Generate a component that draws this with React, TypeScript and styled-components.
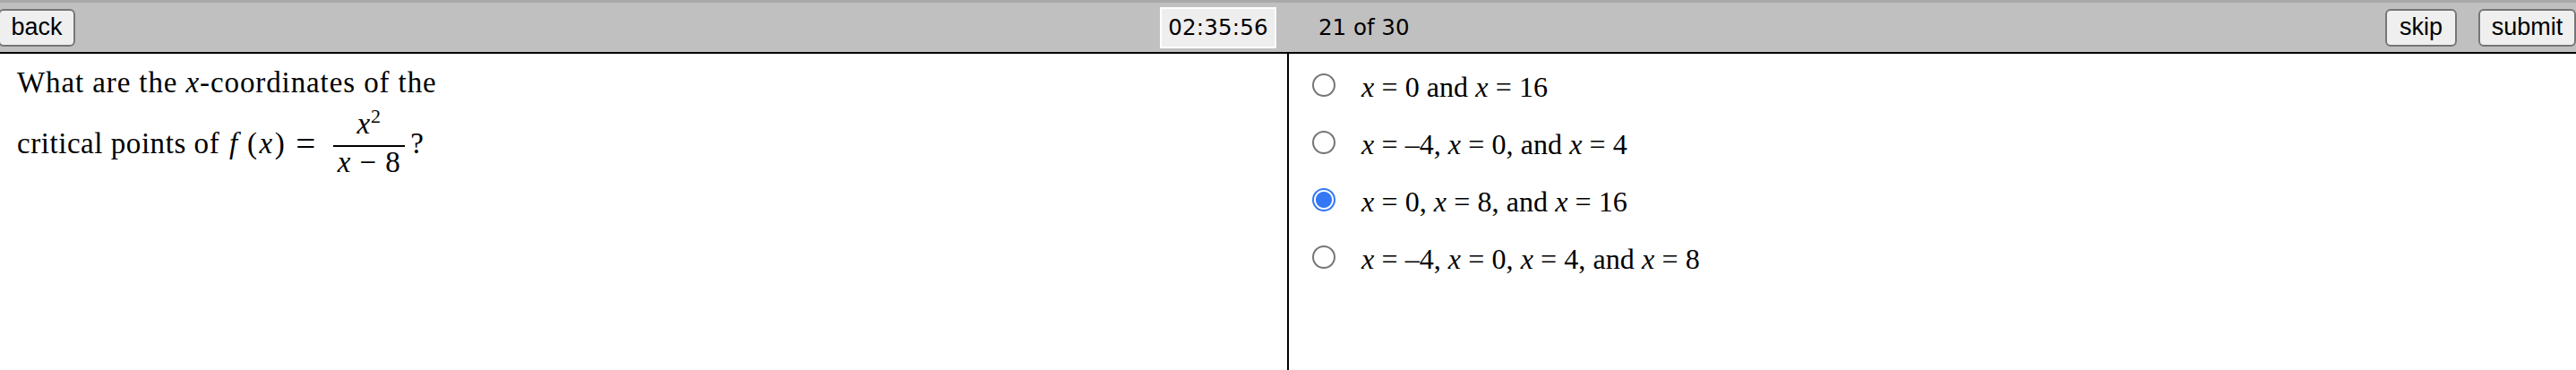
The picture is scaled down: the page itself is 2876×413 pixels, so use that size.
import React from "react";
import styled, { createGlobalStyle } from "styled-components";

const Global = createGlobalStyle`
  html, body { margin: 0; padding: 0; background: #fff; }
  #root { height: 100vh; }
`;

const Page = styled.div`
  display: flex;
  flex-direction: column;
  height: 100%;
  overflow: hidden;
`;

const Toolbar = styled.header`
  display: grid;
  grid-template-columns: 1437px 1fr;
  box-sizing: border-box;
  height: 60px;
  background: #c0c0c0;
  border-top: 3px solid #a9a9a9;
  border-bottom: 2px solid #000;
`;

const ToolbarSide = styled.div`
  display: flex;
  align-items: center;
  justify-content: space-between;
  min-width: 0;
`;

const ToolbarGroup = styled.div`
  display: flex;
  align-items: center;
  gap: 24px;
`;

const Button = styled.button`
  box-sizing: border-box;
  height: 42px;
  padding: 0;
  background: #efefef;
  border: 2px solid #767676;
  border-radius: 6px;
  color: #000;
  font: 27px "Liberation Sans", Arial, sans-serif;
`;

const BackButton = styled(Button)`
  width: 86px;
  margin-left: -2px;
`;

const EndButton = styled(Button)<{ $w: number }>`
  width: ${(p) => p.$w}px;
`;

const Timer = styled.div`
  box-sizing: border-box;
  width: 130px;
  height: 46px;
  margin-right: 12px;
  display: flex;
  align-items: center;
  justify-content: center;
  background: #eee;
  border: 2px solid #fff;
  font: 24.5px "DejaVu Sans", Verdana, sans-serif;
  letter-spacing: 0.2px;
  color: #000;
`;

const Counter = styled.div`
  margin-left: 35px;
  font: 24.5px "DejaVu Sans", Verdana, sans-serif;
  color: #000;
`;

const Content = styled.main`
  flex: 1;
  display: grid;
  grid-template-columns: 1439px 1fr;
`;

const Question = styled.section`
  box-sizing: border-box;
  border-right: 2px solid #000;
  padding: 10px 0 0 19px;
  font: 33px "Liberation Serif", "Times New Roman", serif;
  letter-spacing: 0.9px;
  color: #000;
`;

const QuestionLine = styled.div`
  display: flex;
  align-items: center;
  white-space: pre;
  height: 44px;
`;

const FormulaLine = styled(QuestionLine)`
  height: 76px;
  margin-top: 8px;
`;

const LeadText = styled.span`
  letter-spacing: 0.55px;
`;

const Italic = styled.i`
  font-style: italic;
`;

const MathGroup = styled.span`
  display: inline-flex;
  align-items: center;
  gap: 10px;
  margin-left: 2px;
`;

const Parenthesized = styled.span`
  letter-spacing: 2.5px;
`;

const Equals = styled.span`
  font-size: 39px;
  line-height: 1;
  letter-spacing: 0;
`;

const Fraction = styled.span`
  display: inline-flex;
  flex-direction: column;
  align-items: center;
  margin: 0 6px 0 20px;
  width: 80px;
`;

const Numerator = styled.span`
  box-sizing: border-box;
  line-height: 32px;
  padding-bottom: 8px;
  border-bottom: 2px solid #000;
  width: 100%;
  text-align: center;
`;

const Denominator = styled.span`
  line-height: 34px;
`;

const Sup = styled.sup`
  font-size: 22px;
  line-height: 0;
`;

const Options = styled.form`
  display: flex;
  flex-direction: column;
  padding: 5px 0 0 26px;
`;

const Option = styled.label`
  display: flex;
  align-items: center;
  height: 64px;
  font: 32px "Liberation Serif", "Times New Roman", serif;
  word-spacing: 0.2px;
  color: #000;
`;

const Radio = styled.input.attrs({ type: "radio", name: "answer" })`
  appearance: none;
  box-sizing: border-box;
  width: 26px;
  height: 26px;
  margin: -4px 29px 0 0;
  border: 2px solid #767676;
  border-radius: 50%;
  background: #fff;
  flex: none;

  &:checked {
    border-color: #3478f6;
    background: radial-gradient(circle, #3478f6 0 8.5px, #fff 9.5px);
  }
`;

const X = () => <Italic>x</Italic>;

const answers: React.ReactNode[] = [
  <><X /> = 0 and <X /> = 16</>,
  <><X /> = –4, <X /> = 0, and <X /> = 4</>,
  <><X /> = 0, <X /> = 8, and <X /> = 16</>,
  <><X /> = –4, <X /> = 0, <X /> = 4, and <X /> = 8</>,
];

export default function App() {
  return (
    <Page>
      <Global />
      <Toolbar>
        <ToolbarSide>
          <BackButton>back</BackButton>
          <Timer>02:35:56</Timer>
        </ToolbarSide>
        <ToolbarSide>
          <Counter>21 of 30</Counter>
          <ToolbarGroup>
            <EndButton $w={80}>skip</EndButton>
            <EndButton $w={109}>submit</EndButton>
          </ToolbarGroup>
        </ToolbarSide>
      </Toolbar>
      <Content>
        <Question>
          <QuestionLine>What are the <Italic>x</Italic>-coordinates of the</QuestionLine>
          <FormulaLine>
            <LeadText>critical points of </LeadText>
            <MathGroup>
              <Italic>f</Italic>
              <Parenthesized>(<Italic>x</Italic>)</Parenthesized>
              <Equals>=</Equals>
            </MathGroup>
            <Fraction>
              <Numerator><Italic>x</Italic><Sup>2</Sup></Numerator>
              <Denominator><Italic>x</Italic> − 8</Denominator>
            </Fraction>
            ?
          </FormulaLine>
        </Question>
        <Options>
          {answers.map((a, i) => (
            <Option key={i}>
              <Radio defaultChecked={i === 2} />
              <span>{a}</span>
            </Option>
          ))}
        </Options>
      </Content>
    </Page>
  );
}
